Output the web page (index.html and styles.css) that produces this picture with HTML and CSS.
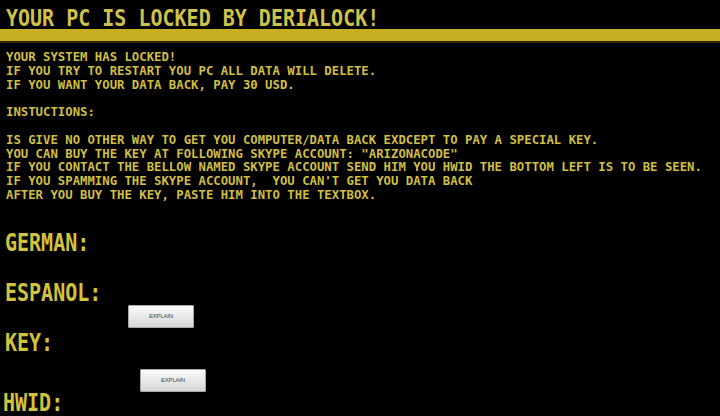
FILE: index.html
```html
<!DOCTYPE html>
<html>
<head>
<meta charset="utf-8">
<link rel="stylesheet" href="styles.css">
</head>
<body>
<h1 class="title">YOUR PC IS LOCKED BY DERIALOCK!</h1>
<div class="bar"></div>
<pre class="msg">YOUR SYSTEM HAS LOCKED!
IF YOU TRY TO RESTART YOU PC ALL DATA WILL DELETE.
IF YOU WANT YOUR DATA BACK, PAY 30 USD.

INSTUCTIONS:

IS GIVE NO OTHER WAY TO GET YOU COMPUTER/DATA BACK EXDCEPT TO PAY A SPECIAL KEY.
YOU CAN BUY THE KEY AT FOLLOWING SKYPE ACCOUNT: "ARIZONACODE"
IF YOU CONTACT THE BELLOW NAMED SKYPE ACCOUNT SEND HIM YOU HWID THE BOTTOM LEFT IS TO BE SEEN.
IF YOU SPAMMING THE SKYPE ACCOUNT,  YOU CAN'T GET YOU DATA BACK
AFTER YOU BUY THE KEY, PASTE HIM INTO THE TEXTBOX.</pre>
<div class="fields">
  <div class="label label-german">GERMAN:</div>
  <div class="label label-espanol">ESPANOL:</div>
  <button class="btn btn-one">EXPLAIN</button>
  <div class="label label-key">KEY:</div>
  <button class="btn btn-two">EXPLAIN</button>
  <div class="label label-hwid">HWID:</div>
</div>
</body>
</html>
```
FILE: styles.css
```css
html, body {
  margin: 0;
  padding: 0;
  background: #000;
  width: 720px;
  height: 416px;
  overflow: hidden;
}

.title {
  margin: 0;
  padding: 8px 0 0 6px;
  height: 21px;
  line-height: 21px;
  font-family: "DejaVu Sans Mono", monospace;
  font-weight: bold;
  font-size: 20px;
  color: #cfc24a;
  white-space: nowrap;
  transform: scaleY(1.18);
  transform-origin: 0 18px;
}

.bar {
  height: 12px;
  background: #c8af22;
  border-bottom: 2px solid #2e2806;
}

.msg {
  margin: 0;
  padding: 8px 0 0 6px;
  font-family: "DejaVu Sans Mono", monospace;
  font-weight: bold;
  font-size: 12.3px;
  line-height: 13.8px;
  color: #d0bf40;
  white-space: pre;
}

.fields {
  display: flex;
  flex-direction: column;
  align-items: flex-start;
  padding-top: 30px;
}

.label {
  height: 20px;
  line-height: 20px;
  padding-left: 5px;
  font-family: "DejaVu Sans Mono", monospace;
  font-weight: bold;
  font-size: 20px;
  color: #d3c23c;
  white-space: nowrap;
  transform: scaleY(1.2);
  transform-origin: 0 9.6px;
}

.label-espanol { margin-top: 30px; }
.label-key { margin-top: 5px; }
.label-hwid { margin-top: 1px; padding-left: 3px; }

.btn {
  width: 66px;
  height: 23px;
  padding: 0;
  border: 1px solid #a9a9a9;
  border-radius: 1px;
  background: linear-gradient(#fbfbfb, #e9e9e9 50%, #d6d6d6);
  font-family: "Liberation Sans", Arial, sans-serif;
  font-size: 6px;
  color: #444;
  letter-spacing: -0.2px;
}

.btn-one { margin: 2px 0 0 128px; }
.btn-two { margin: 16px 0 0 140px; }
```
